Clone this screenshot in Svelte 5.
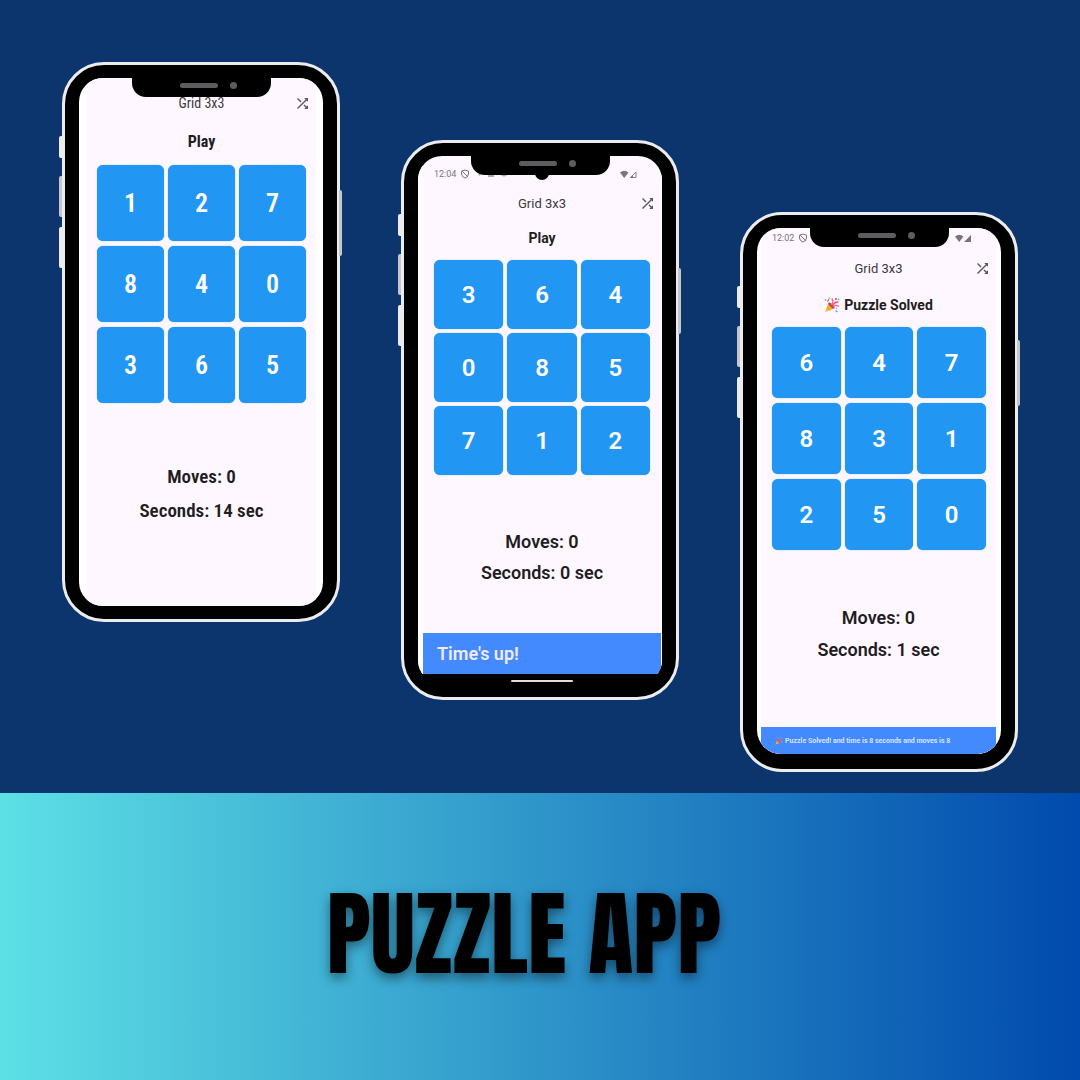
<script>
  const phones = [
    { kind: 'first', time: '', title: 'Play', party: false, tiles: [1, 2, 7, 8, 4, 0, 3, 6, 5], seconds: 14, snack: '' },
    { kind: 'second', time: '12:04', title: 'Play', party: false, tiles: [3, 6, 4, 0, 8, 5, 7, 1, 2], seconds: 0, snack: "Time's up!" },
    { kind: 'third', time: '12:02', title: 'Puzzle Solved', party: true, tiles: [6, 4, 7, 8, 3, 1, 2, 5, 0], seconds: 1, snack: 'Puzzle Solved! and time is 8 seconds and moves is 8' }
  ];
</script>

{#snippet party()}
  <svg class="party" viewBox="0 0 16 16" aria-hidden="true">
    <path d="M1 15 4.6 5.6Q8 7.500 10.300 11.400Z" fill="#fbb72c" />
    <path d="M3 10.200 6.500 13.100M4.100 7.300 8.800 12.100" stroke="#e68a18" stroke-width="1" />
    <ellipse cx="7.500" cy="8.500" rx="1.500" ry="4" transform="rotate(-45 7.500 8.500)" fill="#a54b55" />
    <path d="M7.500 8Q10 5 7.800 1.500M9 9.500Q12 7.500 15 9.500" fill="none" stroke="#f3719b" stroke-width="1.500" />
    <path d="M9 8Q10.500 4.500 14.500 5" fill="none" stroke="#ef536d" stroke-width="1.600" />
    <path d="M3 4Q5 4 4.500 2M11.500 13.500 13.500 15" fill="none" stroke="#42a9e8" stroke-width="1.300" />
    <path d="M11 1h2v2h-2z" fill="#f5688c" />
    <circle cx="5.500" cy="1.200" r=".9" fill="#f6b42c" /><circle cx="14.500" cy="2.500" r=".9" fill="#52b8e8" />
    <circle cx="12.500" cy="11.500" r=".8" fill="#f3719b" /><circle cx="1.500" cy="3" r=".8" fill="#ef536d" />
  </svg>
{/snippet}

<main>
  <section class="showcase">
    {#each phones as phone}
      <article class="phone {phone.kind}">
        <i class="key mute"></i><i class="key up"></i><i class="key down"></i><i class="key power"></i>
        <div class="notch"><span class="speaker"></span><span class="camera"></span></div>
        <div class="screen">
          <div class="app">
            {#if phone.time}
              <div class="status">
                <span>{phone.time}</span>
                <svg class="shield" viewBox="0 0 10 10" aria-hidden="true">
                  <path d="M5 1 8.500 2.200V5Q8.200 8 5 9 1.800 8 1.500 5V2.200ZM2 2 8 8" fill="none" stroke="currentColor" stroke-width="1" />
                </svg>
                {#if phone.kind === 'second'}
                  <svg class="hidden-icons" viewBox="0 0 34 8" aria-hidden="true">
                    <path d="M2 4h3L3.500 6ZM12 5h6v2h-6ZM25 5q3 3 6 0" fill="currentColor" opacity=".6" />
                  </svg>
                {/if}
                <svg class="signal" viewBox="0 0 18 9" aria-hidden="true">
                  <path d="M0 2.500Q4.200-.8 8.500 2.500L4.200 8Z" fill="currentColor" />
                  {#if phone.kind === 'second'}
                    <path d="M10.500 7.500 16 2V7.500Z" fill="none" stroke="currentColor" stroke-width=".9" />
                    <path d="M10 8 13 5V8Z" fill="currentColor" />
                  {:else}
                    <path d="M9 8 16 1V8Z" fill="currentColor" />
                  {/if}
                </svg>
              </div>
            {/if}
            <header>
              <span>Grid 3x3</span>
              <button class="shuffle" aria-label="Shuffle">
                <svg viewBox="4 4 16 16" aria-hidden="true">
                  <path fill="currentColor" d="M10.590 9.170 5.410 4 4 5.410l5.170 5.170 1.420-1.410zM14.500 4l2.040 2.040L4 18.590 5.410 20 17.960 7.460 20 9.500V4h-5.500zm.330 9.410-1.410 1.410 3.130 3.130L14.500 20H20v-5.500l-2.040 2.040-3.130-3.130z" />
                </svg>
              </button>
            </header>
            <h2>{#if phone.party}{@render party()}{/if}{phone.title}</h2>
            <div class="grid">
              {#each phone.tiles as tile}<button>{tile}</button>{/each}
            </div>
            <div class="stats">
              <p>Moves: 0</p>
              <p>Seconds: {phone.seconds} sec</p>
            </div>
            {#if phone.snack}
              <div class="snack">{#if phone.party}{@render party()}{/if}{phone.snack}</div>
            {/if}
          </div>
          {#if phone.kind === 'second'}<div class="nav"><span></span></div>{/if}
        </div>
      </article>
    {/each}
  </section>
  <section class="banner"><h1>PUZZLE APP</h1></section>
</main>

<style>
  :global(body) { margin: 0; }
  main {
    min-height: 100vh;
    display: flex;
    flex-direction: column;
    background: #0b356c;
    font-family: Roboto, "Liberation Sans", sans-serif;
    color: #1f1d22;
  }
  h1, h2, p { margin: 0; }
  button { border: 0; padding: 0; font: inherit; cursor: pointer; }
  .showcase {
    display: flex;
    justify-content: center;
    align-items: flex-start;
    gap: 61px;
    padding: 62px 24px 21px;
  }
  .phone {
    position: relative;
    box-sizing: border-box;
    flex: 0 0 278px;
    padding: 13px 14px;
    border: 3px solid #ececef;
    border-radius: 42px;
    background: #000;
  }
  .second { margin-top: 78px; }
  .third { margin-top: 150px; }
  .key { position: absolute; left: -6px; width: 3px; height: 41px; border-radius: 2px 0 0 2px; background: #ececef; }
  .mute { top: 71px; height: 22px; }
  .up { top: 111px; background: #c5c6cf; }
  .down { top: 162px; }
  .power { left: auto; right: -5px; top: 125px; height: 66px; border-radius: 0 2px 2px 0; background: #c5c6cf; }
  .notch {
    position: absolute;
    z-index: 1;
    top: 12px;
    left: 67px;
    box-sizing: border-box;
    width: 139px;
    height: 20px;
    padding: 0 34px 4px 48px;
    display: flex;
    align-items: center;
    justify-content: space-between;
    border-radius: 0 0 14px 14px;
    background: #000;
  }
  .second .notch::after {
    content: "";
    position: absolute;
    left: 64px;
    top: 11px;
    width: 14px;
    height: 14px;
    border-radius: 50%;
    background: #000;
  }
  .speaker { position: relative; z-index: 1; width: 38px; height: 5px; border-radius: 3px; background: #5d5d5f; }
  .camera { width: 7px; height: 7px; border-radius: 50%; background: #5d5d5f; }
  .screen {
    box-sizing: border-box;
    min-height: 528px;
    display: flex;
    flex-direction: column;
    overflow: hidden;
    border-radius: 24px;
    background: #fff;
  }
  .second .screen { background: #000; }
  .third .screen { min-height: 526px; margin-bottom: 2px; }
  .app { flex: 1; display: flex; flex-direction: column; background: #fef7ff; }
  .first .app { margin: 0 7px 0 8px; padding-top: 14px; }
  .second .app { border: solid #fff; border-width: 0 1px 0 5px; }
  .third .app { margin: 0 5px 0 4px; }
  .status {
    display: flex;
    align-items: center;
    height: 36px;
    padding: 0 23px 0 11px;
    font-size: 9px;
    color: #77747a;
  }
  .third .status { height: 20px; margin-bottom: 9px; }
  .shield { width: 10px; height: 10px; margin-left: 4px; }
  .hidden-icons { width: 34px; height: 8px; margin-left: 6px; }
  .signal { width: 18px; height: 9px; margin-left: auto; }
  header {
    display: grid;
    grid-template-columns: 1fr auto 1fr;
    align-items: center;
    height: 22px;
    padding: 0 8px;
    font-size: 13px;
    color: #3b393e;
  }
  header span { grid-column: 2; }
  .first header { font-size: 14px; }
  .shuffle { justify-self: end; display: flex; background: none; color: #5a575e; }
  .shuffle svg { width: 11px; height: 11px; }
  h2 {
    display: flex;
    justify-content: center;
    align-items: center;
    gap: 4px;
    margin: 10px 0 8px;
    font-size: 14px;
    line-height: 28px;
    font-weight: 700;
  }
  .first h2 { margin: 14px 0 9px; font-size: 16px; }
  .third h2 { margin: 12px 0 8px; }
  .party { width: 16px; height: 16px; }
  .grid {
    display: grid;
    grid-template-columns: repeat(3, 1fr);
    grid-auto-rows: 69px;
    gap: 4px;
    margin: 0 11px;
  }
  .first .grid { grid-auto-rows: 76px; row-gap: 5px; margin: 0 10px; }
  .third .grid { grid-auto-rows: 71px; row-gap: 5px; margin: 0 10px 0 11px; }
  .grid button {
    border-radius: 6px;
    background: #2196f3;
    box-shadow: 0 0 1px #2196f3;
    color: #fff;
    font-size: 24px;
    font-weight: 600;
  }
  .stats { margin-top: 51px; text-align: center; font-size: 18px; line-height: 31px; font-weight: 600; }
  .first .stats { margin-top: 57px; font-size: 19px; line-height: 34px; }
  .third .stats { margin-top: 52px; line-height: 32px; }
  .first { font-family: "Roboto Condensed", Roboto, sans-serif; }
  .first .grid button { font-size: 26px; }
  .snack {
    display: flex;
    align-items: center;
    gap: 2px;
    height: 41px;
    margin-top: auto;
    padding: 0 14px;
    background: #448aff;
    color: #f1eafa;
    font-size: 18px;
    font-weight: 600;
  }
  .third .snack { height: 27px; font-size: 7px; font-weight: 700; color: #d6e2fc; }
  .snack .party { width: 8px; height: 8px; }
  .nav { display: flex; align-items: center; justify-content: center; height: 10px; padding: 4px 0 0 4px; box-sizing: border-box; background: #000; }
  .nav span { width: 62px; height: 2px; border-radius: 1px; background: #dedde0; }
  .banner {
    flex: 1;
    display: flex;
    align-items: center;
    justify-content: center;
    padding: 0 32px 6px 0;
    background: linear-gradient(90deg, #5de0e6, #004aad);
  }
  h1 {
    font-family: Anton, Impact, "Roboto Condensed", "Liberation Sans Narrow", Roboto, sans-serif;
    font-size: 93px;
    line-height: 96px;
    font-weight: 400;
    color: #000;
    white-space: nowrap;
    text-shadow: 0 5px 12px rgb(0 0 0 / 45%);
  }
</style>
